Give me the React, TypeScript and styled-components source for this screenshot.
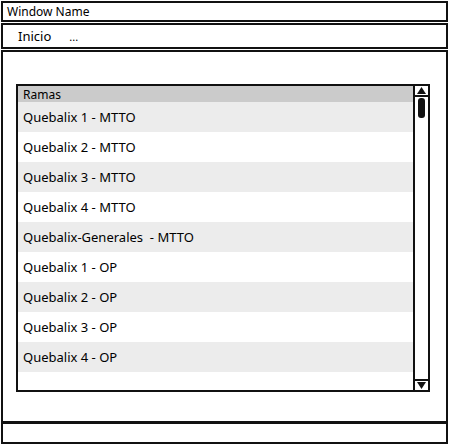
import React from "react";
import styled, { createGlobalStyle } from "styled-components";

const Global = createGlobalStyle`
  html, body { margin: 0; padding: 0; background: #fff; }
  body { font-family: "Noto Sans", "Liberation Sans", sans-serif; color: #000; }
`;

const Frame = styled.div`
  width: 447px;
  height: 443px;
  margin: 1px 0 0 1px;
  display: flex;
  flex-direction: column;
`;

const TitleBar = styled.div`
  height: 21px;
  box-sizing: border-box;
  border: 2px solid #111;
  display: flex;
  align-items: center;
  padding-left: 4px;
  font-size: 12px;
`;

const NavBar = styled.div`
  height: 26px;
  margin-top: 1px;
  box-sizing: border-box;
  border: 2px solid #111;
  display: flex;
  align-items: center;
  padding-left: 15px;
  gap: 18px;
  font-size: 13px;
`;

const NavItem = styled.span<{ $dim?: boolean }>`
  font-size: ${(p) => (p.$dim ? "11px" : "13px")};
`;

const Body = styled.div`
  flex: 1;
  margin-top: 1px;
  box-sizing: border-box;
  border: 2px solid #111;
  border-bottom: none;
  padding: 32px 16px 0 13px;
`;

const Footer = styled.div`
  height: 23px;
  box-sizing: border-box;
  border: 2px solid #111;
  border-top-width: 3px;
`;

const ListBox = styled.div`
  width: 414px;
  height: 308px;
  box-sizing: border-box;
  border: 2px solid #111;
  display: flex;
`;

const Rows = styled.div`
  flex: 1;
  display: flex;
  flex-direction: column;
`;

const Header = styled.div`
  height: 16px;
  background: #cbcbcb;
  display: flex;
  align-items: center;
  padding-left: 5px;
  font-size: 12px;
`;

const Row = styled.div<{ $shaded: boolean }>`
  height: 30px;
  background: ${(p) => (p.$shaded ? "#ececec" : "#fff")};
  display: flex;
  align-items: center;
  padding-left: 5px;
  font-size: 13px;
  white-space: pre;
`;

const Scrollbar = styled.div`
  width: 13px;
  border-left: 2px solid #111;
  display: flex;
  flex-direction: column;
  align-items: center;
`;

const ArrowBox = styled.div<{ $down?: boolean }>`
  width: 100%;
  height: 9px;
  box-sizing: content-box;
  display: flex;
  align-items: center;
  justify-content: center;
  ${(p) => (p.$down ? "border-top: 2px solid #111; margin-top: auto;" : "border-bottom: 2px solid #111;")}
`;

const Thumb = styled.div`
  width: 7px;
  height: 20px;
  margin-top: 1px;
  background: #111;
  border-radius: 3px;
`;

const Arrow = ({ down }: { down?: boolean }) => (
  <svg width="9" height="7" viewBox="0 0 9 7">
    <polygon points={down ? "0,0 9,0 4.5,7" : "0,7 9,7 4.5,0"} fill="#111" />
  </svg>
);

const items = [
  "Quebalix 1 - MTTO",
  "Quebalix 2 - MTTO",
  "Quebalix 3 - MTTO",
  "Quebalix 4 - MTTO",
  "Quebalix-Generales  - MTTO",
  "Quebalix 1 - OP",
  "Quebalix 2 - OP",
  "Quebalix 3 - OP",
  "Quebalix 4 - OP",
];

export default function App() {
  return (
    <>
      <Global />
      <Frame>
        <TitleBar>Window Name</TitleBar>
        <NavBar>
          <NavItem>Inicio</NavItem>
          <NavItem $dim>...</NavItem>
        </NavBar>
        <Body>
          <ListBox>
            <Rows>
              <Header>Ramas</Header>
              {items.map((t, i) => (
                <Row key={i} $shaded={i % 2 === 0}>
                  {t}
                </Row>
              ))}
            </Rows>
            <Scrollbar>
              <ArrowBox>
                <Arrow />
              </ArrowBox>
              <Thumb />
              <ArrowBox $down>
                <Arrow down />
              </ArrowBox>
            </Scrollbar>
          </ListBox>
        </Body>
        <Footer />
      </Frame>
    </>
  );
}
